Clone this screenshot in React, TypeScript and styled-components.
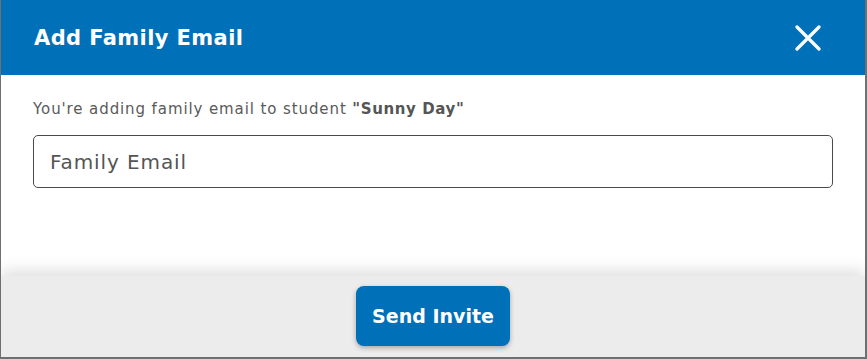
import * as React from 'react';
import styled, {createGlobalStyle} from 'styled-components';

const GlobalStyle = createGlobalStyle`
    html, body {
        margin: 0;
        padding: 0;
        background: #707070;
        font-family: 'DejaVu Sans', 'Open Sans', sans-serif;
    }
`;

const blue = '#0070b9';

const Backdrop = styled.div`
    width: 867px;
    height: 359px;
    padding-left: 1px;
    box-sizing: border-box;
`;

const Modal = styled.div`
    width: 864px;
    height: 357px;
    display: flex;
    flex-direction: column;
    background: #fff;
    overflow: hidden;
`;

const Header = styled.div`
    height: 75px;
    flex-shrink: 0;
    background: ${blue};
    display: flex;
    align-items: center;
    justify-content: space-between;
    padding: 0 43px 0 33px;
`;

const Title = styled.h2`
    margin: 0;
    color: #fff;
    font-size: 21px;
    font-weight: 700;
    letter-spacing: 0.4px;
`;

const CloseButton = styled.button`
    border: none;
    background: none;
    padding: 0;
    width: 28px;
    height: 28px;
    display: flex;
    align-items: center;
    justify-content: center;
    cursor: pointer;
`;

const Body = styled.div`
    flex: 1;
    padding: 24px 32px 0 32px;
`;

const Intro = styled.p`
    margin: 0 0 16px;
    font-size: 15px;
    line-height: 20px;
    color: #5a5a5a;
    letter-spacing: 0.9px;

    strong {
        font-weight: 700;
        color: #555;
        letter-spacing: 0.6px;
    }
`;

const EmailInput = styled.input`
    width: 100%;
    height: 53px;
    box-sizing: border-box;
    border: 1px solid #4a4a4a;
    border-radius: 5px;
    padding: 0 16px;
    font-family: inherit;
    font-size: 20px;
    letter-spacing: 0.9px;
    color: #333;
    outline: none;

    &::placeholder {
        color: #555;
    }
`;

const Footer = styled.div`
    height: 81px;
    flex-shrink: 0;
    background: #ececec;
    display: flex;
    justify-content: center;
    padding-top: 10px;
    box-sizing: border-box;
    box-shadow: 0 -6px 14px rgba(0, 0, 0, 0.12);
`;

const PrimaryButton = styled.button`
    height: 60px;
    width: 154px;
    border: none;
    border-radius: 8px;
    background: ${blue};
    color: #fff;
    font-family: inherit;
    font-size: 19px;
    font-weight: 700;
    box-shadow: 0 2px 5px rgba(0, 0, 0, 0.3);
    cursor: pointer;
`;

export default function App() {
    return (
        <>
            <GlobalStyle />
            <Backdrop>
                <Modal>
                    <Header>
                        <Title>Add Family Email</Title>
                        <CloseButton aria-label="Close">
                            <svg width="26" height="26" viewBox="0 0 26 26">
                                <path
                                    d="M2 2 L24 24 M24 2 L2 24"
                                    stroke="#fff"
                                    strokeWidth="3.2"
                                    strokeLinecap="round"
                                />
                            </svg>
                        </CloseButton>
                    </Header>
                    <Body>
                        <Intro>
                            You're adding family email to student <strong>"Sunny Day"</strong>
                        </Intro>
                        <EmailInput placeholder="Family Email" />
                    </Body>
                    <Footer>
                        <PrimaryButton>Send Invite</PrimaryButton>
                    </Footer>
                </Modal>
            </Backdrop>
        </>
    );
}
